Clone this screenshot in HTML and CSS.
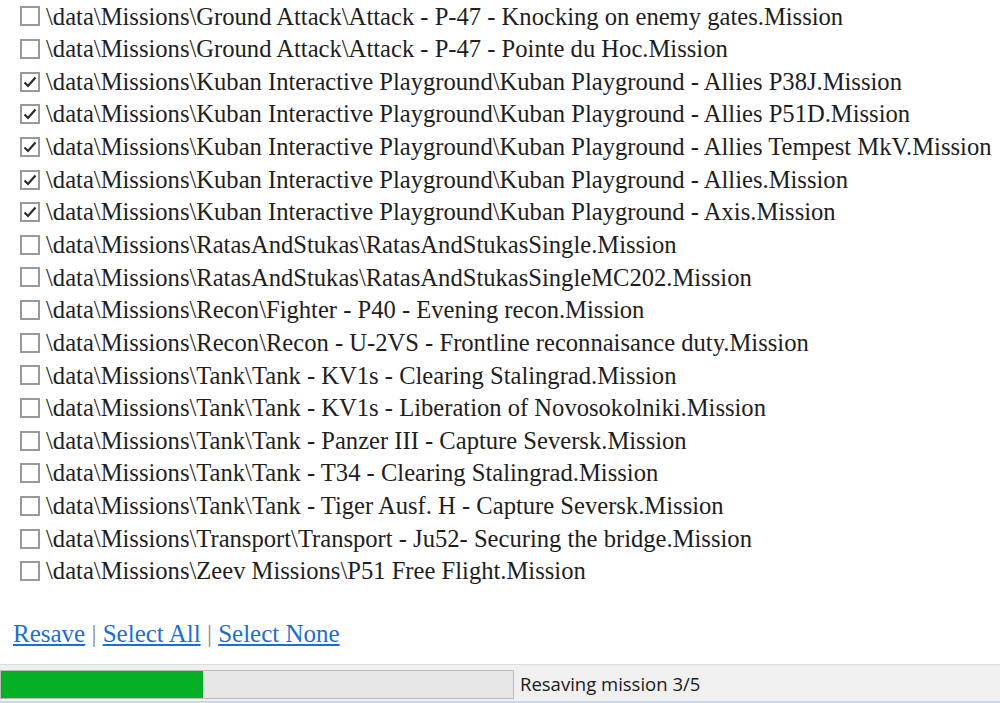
FILE: index.html
```html
<!DOCTYPE html>
<html lang="en">
<head>
  <meta charset="UTF-8" />
  <title>Resave missions</title>
  <link rel="stylesheet" href="styles.css">
</head>
<body>
  <div class="page">
    <ul class="mission-list" id="missionList"></ul>

    <div class="actions">
      <a href="#" class="action">Resave</a>
      <span class="sep">|</span>
      <a href="#" class="action">Select All</a><span class="sep"> |</span>
      <a href="#" class="action">Select None</a>
    </div>
  </div>

  <!-- status bar -->
  <div class="statusbar">
    <div class="progress"><div class="progress-fill" style="width: 39.5%"></div></div>
    <div class="status-text">Resaving mission 3/5</div>
  </div>

  <script>
    const missions = [
      ['\\data\\Missions\\Ground Attack\\Attack - P-47 - Knocking on enemy gates.Mission', false],
      ['\\data\\Missions\\Ground Attack\\Attack - P-47 - Pointe du Hoc.Mission', false],
      ['\\data\\Missions\\Kuban Interactive Playground\\Kuban Playground - Allies P38J.Mission', true],
      ['\\data\\Missions\\Kuban Interactive Playground\\Kuban Playground - Allies P51D.Mission', true],
      ['\\data\\Missions\\Kuban Interactive Playground\\Kuban Playground - Allies Tempest MkV.Mission', true],
      ['\\data\\Missions\\Kuban Interactive Playground\\Kuban Playground - Allies.Mission', true],
      ['\\data\\Missions\\Kuban Interactive Playground\\Kuban Playground - Axis.Mission', true],
      ['\\data\\Missions\\RatasAndStukas\\RatasAndStukasSingle.Mission', false],
      ['\\data\\Missions\\RatasAndStukas\\RatasAndStukasSingleMC202.Mission', false],
      ['\\data\\Missions\\Recon\\Fighter - P40 - Evening recon.Mission', false],
      ['\\data\\Missions\\Recon\\Recon - U-2VS - Frontline reconnaisance duty.Mission', false],
      ['\\data\\Missions\\Tank\\Tank - KV1s - Clearing Stalingrad.Mission', false],
      ['\\data\\Missions\\Tank\\Tank - KV1s - Liberation of Novosokolniki.Mission', false],
      ['\\data\\Missions\\Tank\\Tank - Panzer III - Capture Seversk.Mission', false],
      ['\\data\\Missions\\Tank\\Tank - T34 - Clearing Stalingrad.Mission', false],
      ['\\data\\Missions\\Tank\\Tank - Tiger Ausf. H - Capture Seversk.Mission', false],
      ['\\data\\Missions\\Transport\\Transport - Ju52- Securing the bridge.Mission', false],
      ['\\data\\Missions\\Zeev Missions\\P51 Free Flight.Mission', false]
    ];

    const check = '<svg viewBox="0 0 20 20" width="20" height="20"><polyline points="4.5,10.5 8,14 15.5,5.5" fill="none" stroke="#2b2b2b" stroke-width="2.2"/></svg>';
    const list = document.getElementById('missionList');
    missions.forEach(([path, checked]) => {
      const li = document.createElement('li');
      li.className = 'mission';
      li.innerHTML = '<span class="box">' + (checked ? check : '') + '</span><span class="path"></span>';
      li.querySelector('.path').textContent = path;
      list.appendChild(li);
    });
  </script>
</body>
</html>
```

FILE: styles.css
```css
* {
  box-sizing: border-box;
  margin: 0;
  padding: 0;
}
html, body {
  height: 100%;
}
body {
  font-family: 'Liberation Serif', 'Times New Roman', serif;
  font-size: 24.6px;
  color: #1e1e1e;
  background: #fff;
  display: flex;
  flex-direction: column;
}
.page {
  flex: 1;
}
.mission-list {
  list-style: none;
}
.mission {
  display: flex;
  align-items: center;
  height: 32.65px;
  padding-left: 20px;
  white-space: nowrap;
}
.box {
  width: 20px;
  height: 20px;
  border: 2px solid #999;
  background: #fff;
  margin-right: 6px;
  flex-shrink: 0;
  position: relative;
}
.box svg {
  position: absolute;
  left: -2px;
  top: -2px;
}
.path {
  line-height: 1;
  padding-top: 1px;
}
.actions {
  margin-top: 33px;
  padding-left: 13px;
  font-size: 25px;
  line-height: 1;
  white-space: nowrap;
}
.action {
  color: #1a6fd0;
  text-decoration: underline;
}
.sep {
  color: #8a8a8a;
}
.statusbar {
  height: 39px;
  background: #f0f0f0;
  border-top: 1px solid #dcdcdc;
  border-bottom: 2px solid #c9d8ea;
  display: flex;
  align-items: center;
}
.progress {
  width: 514px;
  height: 29px;
  background: #e6e6e6;
  border: 1px solid #bcbcbc;
  margin-top: 2px;
}
.progress-fill {
  height: 100%;
  background: #06b025;
}
.status-text {
  font-family: 'Open Sans', 'Noto Sans', sans-serif;
  font-size: 18.5px;
  color: #1a1a1a;
  padding-left: 6px;
}
```
